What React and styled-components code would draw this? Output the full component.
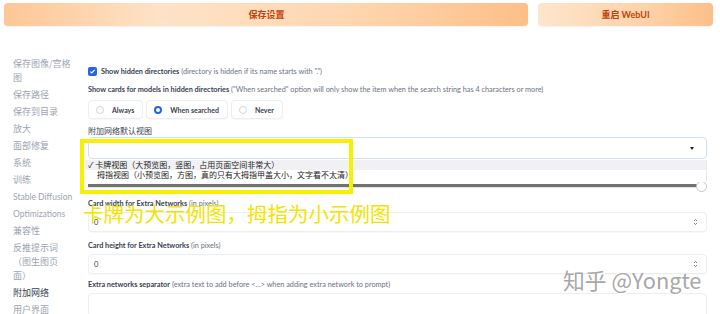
import React from 'react';
import styled, { createGlobalStyle } from 'styled-components';

const GlobalStyle = createGlobalStyle`
  body {
    margin: 0;
    background: #fff;
    font-family: Lato, "Noto Sans CJK SC", sans-serif;
    color: #374151;
  }
`;

const Page = styled.div`
  position: relative;
  width: 720px;
  height: 314px;
  overflow: hidden;
  padding: 3px 7px 0 4px;
  box-sizing: border-box;
`;

const TopBar = styled.div`
  display: grid;
  grid-template-columns: 524px 175px;
  gap: 10px;
  height: 23px;
`;

const TopButton = styled.button`
  border: none;
  border-radius: 4px;
  background: ${p =>
    p.wide
      ? 'linear-gradient(to right, #fdc796 0%, #fee2c7 30%, #fed7b0 65%, #fdbf88 100%)'
      : 'linear-gradient(to right, #fee5cc 0%, #fdd3a9 60%, #fdbf88 100%)'};
  box-shadow: 0 1px 2px rgba(0, 0, 0, 0.06);
  color: #c2410c;
  font-family: Lato, "Noto Sans CJK SC", sans-serif;
  font-weight: 700;
  font-size: 9px;
  padding: 0;
  padding-left: ${p => (p.wide ? '1px' : '0')};
`;

const Body = styled.div`
  display: grid;
  grid-template-columns: 84px 619px;
`;

const Sidebar = styled.nav`
  display: flex;
  flex-direction: column;
  gap: 3px;
  padding: 31px 0 0 9px;
`;

const NavItem = styled.div`
  width: 60px;
  font-size: ${p => (p.latin ? '8.5px' : '9px')};
  line-height: 14px;
  text-spacing-trim: space-all;
  white-space: ${p => (p.latin ? 'nowrap' : 'normal')};
  color: ${p => (p.active ? '#374151' : '#9ca3af')};
  font-family: ${p =>
    p.latin ? 'Lato, sans-serif' : '"Noto Sans CJK SC", sans-serif'};
`;

const Main = styled.main`
  position: relative;
  display: flex;
  flex-direction: column;
  padding-top: 39px;
`;

const CheckRow = styled.label`
  display: flex;
  align-items: center;
  gap: 4px;
  height: 12px;
  font-size: 7.3px;
`;

const CheckBox = styled.span`
  width: 9px;
  height: 9px;
  border-radius: 2px;
  background: #2563eb;
  display: flex;
  align-items: center;
  justify-content: center;
`;

const Strong = styled.span`
  color: #374151;
  font-weight: 700;
`;

const Hint = styled.span`
  color: #6b7280;
  font-weight: 400;
`;

const Label = styled.div`
  font-size: ${p => (p.cjk ? '8px' : '7.3px')};
  font-family: ${p =>
    p.cjk ? '"Noto Sans CJK SC", sans-serif' : 'Lato, sans-serif'};
  line-height: 12px;
  margin-top: ${p => p.top || 0}px;
  margin-bottom: ${p => p.bottom || 0}px;
  color: #374151;
  white-space: nowrap;
`;

const RadioRow = styled.div`
  display: flex;
  gap: 3px;
  margin-top: 4px;
`;

const RadioPill = styled.div`
  display: flex;
  align-items: center;
  gap: 8px;
  height: 19px;
  padding: 0 8px 0 7px;
  box-sizing: border-box;
  border: 1px solid #eceef1;
  border-radius: 4px;
  background: #fff;
  box-shadow: 0 1px 1px rgba(0, 0, 0, 0.03);
  font-size: 7px;
  font-weight: 700;
  color: #374151;
`;

const RadioDot = styled.span`
  width: 8px;
  height: 8px;
  border-radius: 50%;
  box-sizing: border-box;
  border: ${p => (p.on ? '2.5px solid #2563eb' : '1px solid #d1d5db')};
  background: #fff;
`;

const SelectWrap = styled.div`
  position: relative;
`;

const SelectBox = styled.div`
  height: 22px;
  box-sizing: border-box;
  border: 1px solid #cfe2f5;
  border-radius: 4px;
  background: #fff;
  display: flex;
  align-items: center;
  justify-content: flex-end;
  padding-right: 12px;
`;

const Caret = styled.span`
  width: 0;
  height: 0;
  border-left: 2.5px solid transparent;
  border-right: 2.5px solid transparent;
  border-top: 3px solid #222;
`;

const Menu = styled.div`
  position: absolute;
  top: 23px;
  left: -3px;
  right: 0;
  background: #fff;
  border-right: 1px solid #e5e7eb;
  font-family: "Noto Sans CJK SC", sans-serif;
  font-size: 8px;
  color: #222;
  z-index: 2;
`;

const MenuItem = styled.div`
  height: ${p => (p.selected ? 10 : 12)}px;
  line-height: 10px;
  padding-left: ${p => (p.selected ? 3 : 12)}px;
  background: ${p => (p.selected ? '#f1f1f3' : '#fff')};
  white-space: nowrap;
`;

const SliderArea = styled.div`
  height: 39px;
  position: relative;
`;

const Track = styled.div`
  position: absolute;
  left: 0;
  right: 7px;
  top: 25px;
  height: 3px;
  background: #717171;
  box-shadow: 0 1px 1px rgba(0, 0, 0, 0.12);
`;

const Thumb = styled.div`
  position: absolute;
  right: 0;
  top: 22px;
  width: 9px;
  height: 9px;
  border-radius: 50%;
  border: 1px solid #c8c8c8;
  background: #fff;
`;

const NumberBox = styled.div`
  height: 20px;
  box-sizing: border-box;
  border: 1px solid #eceef1;
  border-radius: 4px;
  background: #fff;
  box-shadow: 0 1px 1px rgba(0, 0, 0, 0.03);
  display: flex;
  align-items: center;
  justify-content: space-between;
  padding: 0 8px 0 5px;
  font-size: 7.5px;
  color: #374151;
`;

const Spinner = styled.svg`
  width: 5px;
  height: 8px;
`;

const TextBox = styled(NumberBox)`
  height: 24px;
`;

const Highlight = styled.div`
  position: absolute;
  left: -8px;
  top: 113px;
  width: 273px;
  height: 55px;
  box-sizing: border-box;
  border: 4px solid #f7f000;
  z-index: 3;
`;

const Annotation = styled.div`
  position: absolute;
  left: -5px;
  top: 174px;
  font-family: "Noto Sans CJK SC", sans-serif;
  font-size: 20.5px;
  line-height: 26px;
  color: #f3e400;
  white-space: nowrap;
  z-index: 3;
`;

const Watermark = styled.div`
  position: absolute;
  left: 563px;
  top: 266px;
  font-family: "Noto Sans CJK SC", sans-serif;
  font-size: 21.8px;
  line-height: 28px;
  color: #a8a8a8;
  text-shadow: 1px 1px 0 #fff, -1px -1px 0 rgba(255, 255, 255, 0.7);
  white-space: nowrap;
`;

const navItems = [
  { text: '保存图像/宫格图' },
  { text: '保存路径' },
  { text: '保存到目录' },
  { text: '放大' },
  { text: '面部修复' },
  { text: '系统' },
  { text: '训练' },
  { text: 'Stable Diffusion', latin: true },
  { text: 'Optimizations', latin: true },
  { text: '兼容性' },
  { text: '反推提示词（图生图页面）' },
  { text: '附加网络', active: true },
  { text: '用户界面' },
];

const radios = [
  { text: 'Always' },
  { text: 'When searched', on: true },
  { text: 'Never' },
];

const SpinIcon = () => (
  <Spinner viewBox="0 0 5 8">
    <path d="M1 3 L2.5 1.5 L4 3 M1 5 L2.5 6.5 L4 5" stroke="#666" strokeWidth="0.8" fill="none" />
  </Spinner>
);

const App = () => {
  return (
    <Page>
      <GlobalStyle />
      <TopBar>
        <TopButton wide>保存设置</TopButton>
        <TopButton>重启 WebUI</TopButton>
      </TopBar>
      <Body>
        <Sidebar>
          {navItems.map(item => (
            <NavItem key={item.text} active={item.active} latin={item.latin}>
              {item.text}
            </NavItem>
          ))}
        </Sidebar>
        <Main>
          <CheckRow>
            <CheckBox>
              <svg width="7" height="7" viewBox="0 0 7 7">
                <path d="M1.3 3.6 L2.8 5 L5.7 1.9" stroke="#fff" strokeWidth="1.2" fill="none" />
              </svg>
            </CheckBox>
            <span>
              <Strong>Show hidden directories</Strong>{' '}
              <Hint>(directory is hidden if its name starts with ".")</Hint>
            </span>
          </CheckRow>
          <Label top={7}>
            <Strong>Show cards for models in hidden directories</Strong>{' '}
            <Hint>
              ("When searched" option will only show the item when the search
              string has 4 characters or more)
            </Hint>
          </Label>
          <RadioRow>
            {radios.map(r => (
              <RadioPill key={r.text}>
                <RadioDot on={r.on} />
                {r.text}
              </RadioPill>
            ))}
          </RadioRow>
          <Label cjk top={6}>附加网络默认视图</Label>
          <SelectWrap>
            <SelectBox>
              <Caret />
            </SelectBox>
            <Menu>
              <MenuItem selected>✓ 卡牌视图（大预览图，竖图，占用页面空间非常大）</MenuItem>
              <MenuItem>拇指视图（小预览图，方图，真的只有大拇指甲盖大小，文字看不太清）</MenuItem>
            </Menu>
          </SelectWrap>
          <SliderArea>
            <Track />
            <Thumb />
          </SliderArea>
          <Label bottom={2}>
            <Strong>Card width for Extra Networks</Strong> <Hint>(in pixels)</Hint>
          </Label>
          <NumberBox>
            0
            <SpinIcon />
          </NumberBox>
          <Label top={8} bottom={2}>
            <Strong>Card height for Extra Networks</Strong> <Hint>(in pixels)</Hint>
          </Label>
          <NumberBox>
            0
            <SpinIcon />
          </NumberBox>
          <Label top={5} bottom={2}>
            <Strong>Extra networks separator</Strong>{' '}
            <Hint>(extra text to add before &lt;...&gt; when adding extra network to prompt)</Hint>
          </Label>
          <TextBox />
          <Highlight />
          <Annotation>卡牌为大示例图，拇指为小示例图</Annotation>
        </Main>
      </Body>
      <Watermark>知乎 @Yongte</Watermark>
    </Page>
  );
};

export default App;
